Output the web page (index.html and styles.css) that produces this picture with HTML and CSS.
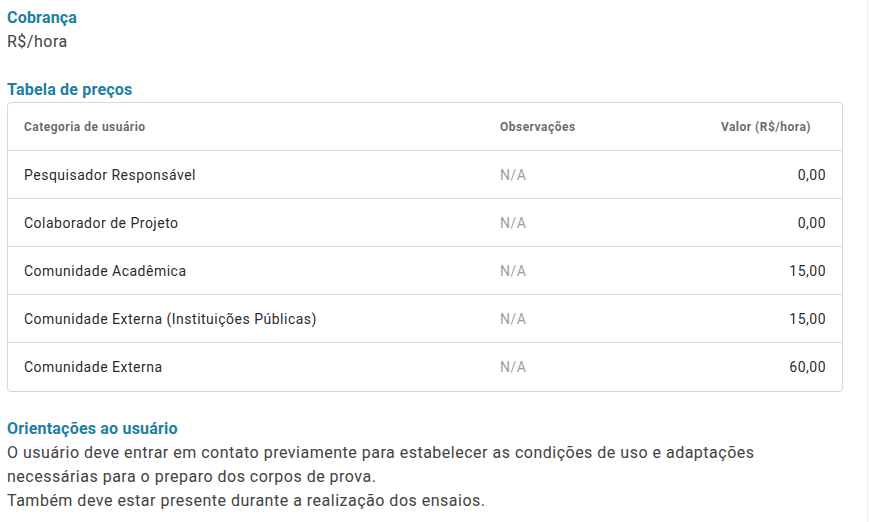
FILE: index.html
```html
<!DOCTYPE html>
<html lang="pt-BR">
<head>
<meta charset="utf-8">
<title>Cobrança</title>
<link rel="stylesheet" href="styles.css">
</head>
<body>
<main class="page">
  <section class="block">
    <h2 class="title">Cobrança</h2>
    <p class="text">R$/hora</p>
  </section>
  <section class="block">
    <h2 class="title">Tabela de preços</h2>
    <div class="table-wrap">
      <table class="prices">
        <thead>
          <tr>
            <th class="c-cat">Categoria de usuário</th>
            <th class="c-obs">Observações</th>
            <th class="c-val">Valor (R$/hora)</th>
          </tr>
        </thead>
        <tbody>
          <tr><td>Pesquisador Responsável</td><td class="na">N/A</td><td class="num">0,00</td></tr>
          <tr><td>Colaborador de Projeto</td><td class="na">N/A</td><td class="num">0,00</td></tr>
          <tr><td>Comunidade Acadêmica</td><td class="na">N/A</td><td class="num">15,00</td></tr>
          <tr><td>Comunidade Externa (Instituições Públicas)</td><td class="na">N/A</td><td class="num">15,00</td></tr>
          <tr><td>Comunidade Externa</td><td class="na">N/A</td><td class="num">60,00</td></tr>
        </tbody>
      </table>
    </div>
  </section>
  <section class="block">
    <h2 class="title">Orientações ao usuário</h2>
    <p class="text">O usuário deve entrar em contato previamente para estabelecer as condições de uso e adaptações necessárias para o preparo dos corpos de prova.<br>Também deve estar presente durante a realização dos ensaios.</p>
  </section>
</main>
</body>
</html>
```

FILE: styles.css
```css
html, body {
  margin: 0;
  padding: 0;
  background: #fff;
}
body {
  font-family: Roboto, "Liberation Sans", sans-serif;
  color: rgba(0, 0, 0, 0.87);
}
.page {
  box-sizing: border-box;
  width: 868px;
  min-height: 522px;
  padding: 6px 24px 0 7px;
  border-right: 1px solid #ececec;
  display: flex;
  flex-direction: column;
  gap: 24px;
}
.block {
  display: flex;
  flex-direction: column;
}
.title {
  margin: 0;
  font-size: 16px;
  line-height: 24px;
  font-weight: 700;
  color: #1b7ea2;
  letter-spacing: 0.0125em;
}
.text {
  margin: 0;
  font-size: 16px;
  line-height: 24px;
  color: #424242;
  letter-spacing: 0.03125em;
}
.table-wrap {
  border: 1px solid #d6d6d6;
  border-radius: 4px;
  overflow: hidden;
  margin-bottom: 1px;
}
.prices {
  width: 100%;
  border-collapse: collapse;
  table-layout: fixed;
}
.prices th {
  height: 47px;
  padding: 0 16px;
  font-size: 12px;
  font-weight: 700;
  color: rgba(0, 0, 0, 0.6);
  text-align: left;
  border-bottom: 1px solid #dedede;
  letter-spacing: 0.04em;
}
.prices th.c-cat { width: 444px; }
.prices th.c-obs { width: 180px; }
.prices th.c-val { text-align: right; padding-right: 31px; }
.prices td {
  height: 47px;
  padding: 0 16px;
  font-size: 14px;
  letter-spacing: 0.5px;
  border-bottom: 1px solid #dedede;
}
.prices tbody tr:last-child td { border-bottom: none; height: 48px; }
.prices td.na { color: #9e9e9e; }
.prices td.num { text-align: right; }
```
